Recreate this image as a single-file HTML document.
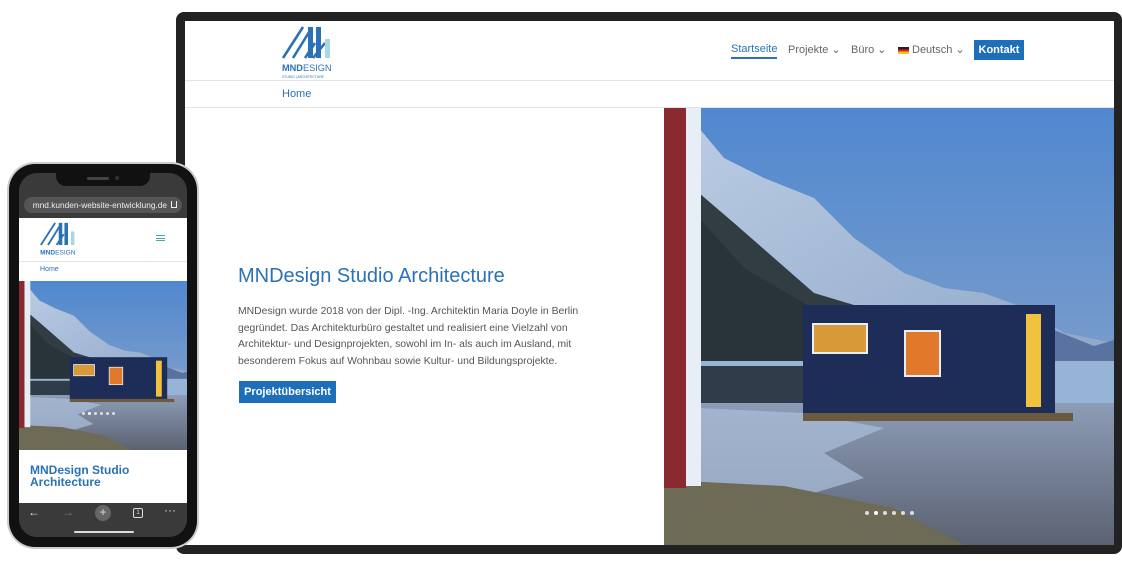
<!DOCTYPE html>
<html><head><meta charset="utf-8"><style>
*{margin:0;padding:0;box-sizing:border-box}
body{width:1122px;height:568px;background:#fff;position:relative;overflow:hidden;font-family:"Liberation Sans",sans-serif}
.a{position:absolute}
.blue{color:#2a72b5}
</style></head><body>
<svg width="0" height="0" style="position:absolute">
<defs>
<linearGradient id="sky" x1="0" y1="0" x2="0" y2="1"><stop offset="0" stop-color="#5088cf"/><stop offset="0.5" stop-color="#7399cc"/><stop offset="1" stop-color="#9ab3d4"/></linearGradient>
<linearGradient id="snow" x1="0" y1="0" x2="1" y2="1"><stop offset="0" stop-color="#b9cbe3"/><stop offset="1" stop-color="#8ea7c8"/></linearGradient>
<linearGradient id="gr" x1="0" y1="0" x2="0" y2="1"><stop offset="0" stop-color="#8d9cb6"/><stop offset="1" stop-color="#5b6272"/></linearGradient>
<symbol id="scene" viewBox="0 0 450 437" preserveAspectRatio="xMidYMid slice">
<rect width="450" height="437" fill="url(#sky)"/>
<path d="M35 20 L60 50 L100 70 L150 90 L190 130 L240 165 L280 180 L320 185 L360 200 L400 225 L450 235 L450 260 L35 260Z" fill="url(#snow)"/>
<path d="M35 85 L70 115 L110 150 L150 185 L200 200 L230 215 L35 260Z" fill="#313d42"/>
<path d="M35 110 L80 160 L140 195 L160 205 L139 260 L35 260Z" fill="#28343a"/>
<path d="M380 218 L430 238 L450 232 L450 255 L385 255Z" fill="#5a72a0"/>
<rect x="35" y="253" width="415" height="45" fill="#97b4d6"/>
<rect x="35" y="258" width="110" height="37" fill="#2e3d49"/>
<rect x="35" y="295" width="415" height="142" fill="url(#gr)"/>
<path d="M35 300 L140 305 L220 320 L160 345 L200 370 L150 385 L35 380Z" fill="#a9bcd8" opacity=".75"/>
<path d="M0 372 L120 378 L230 400 L300 437 L0 437Z" fill="#6d6b55"/>
<rect x="139" y="197" width="252" height="108" fill="#1d2d57"/>
<rect x="139" y="305" width="270" height="8" fill="#6b5a3e"/>
<rect x="148" y="215" width="56" height="31" fill="#e8eef5"/><rect x="150" y="217" width="52" height="27" fill="#d89a38"/>
<rect x="240" y="222" width="37" height="47" fill="#e8eef5"/><rect x="242" y="224" width="33" height="43" fill="#e07a2a"/>
<rect x="362" y="206" width="15" height="93" fill="#f0c23e"/>
<rect x="0" y="0" width="22" height="380" fill="#8a2a30"/>
<rect x="22" y="0" width="15" height="378" fill="#e8eef6"/>
</symbol>
</defs></svg>

<!-- Monitor -->
<div class="a" style="left:176px;top:12px;width:946px;height:542px;background:#222;border-radius:8px"></div>
<div class="a" style="left:185px;top:21px;width:929px;height:524px;background:#fff;overflow:hidden">
  <svg class="a" style="left:96px;top:2px" width="52" height="56" viewBox="0 0 52 56">
    <path d="M2 35 L22 4 M12 35 L30 6 M24 35 L34 20 M32 35 L44 20" stroke="#2a72b5" stroke-width="2.6" fill="none"/>
    <rect x="27" y="4" width="5" height="31" fill="#2a72b5"/>
    <rect x="35" y="4" width="5" height="31" fill="#2a72b5"/>
    <rect x="44" y="16" width="5" height="19" fill="#a8d8e6"/>
    <text x="1" y="48" font-size="9.2" fill="#2a72b5" font-family="Liberation Sans" font-weight="bold">MND<tspan font-weight="normal">ESIGN</tspan></text>
    <text x="1" y="55" font-size="3.4" fill="#2a72b5" font-family="Liberation Sans">STUDIO | ARCHITECTURE</text>
  </svg>
  <div class="a" style="left:546px;top:22px;font-size:11px;color:#2a72b5;border-bottom:2px solid #2a72b5;padding-bottom:2px">Startseite</div>
  <div class="a" style="left:603px;top:22px;font-size:11px;color:#666">Projekte ⌄</div>
  <div class="a" style="left:666px;top:22px;font-size:11px;color:#666">Büro ⌄</div>
  <div class="a" style="left:713px;top:26px;width:11px;height:7px;background:linear-gradient(#222 33%,#d22 33% 66%,#f5c518 66%)"></div>
  <div class="a" style="left:727px;top:22px;font-size:11px;color:#666">Deutsch ⌄</div>
  <div class="a" style="left:789px;top:19px;width:50px;height:20px;background:#1e6fba;color:#fff;font-size:11px;font-weight:bold;text-align:center;line-height:20px">Kontakt</div>
  <div class="a" style="left:0;top:59px;width:929px;height:1px;background:#e4e4e4"></div>
  <div class="a blue" style="left:97px;top:67px;font-size:11px">Home</div>
  <div class="a" style="left:0;top:86px;width:929px;height:1px;background:#e4e4e4"></div>
  <div class="a blue" style="left:53px;top:244px;font-size:20px;white-space:nowrap">MNDesign Studio Architecture</div>
  <div class="a" style="left:53px;top:283px;width:352px;font-size:10.4px;line-height:16.5px;color:#555">MNDesign wurde 2018 von der Dipl. -Ing. Architektin Maria Doyle in Berlin gegründet. Das Architekturbüro gestaltet und realisiert eine Vielzahl von Architektur- und Designprojekten, sowohl im In- als auch im Ausland, mit besonderem Fokus auf Wohnbau sowie Kultur- und Bildungsprojekte.</div>
  <div class="a" style="left:54px;top:360px;width:97px;height:22px;background:#1e6fba;color:#fff;font-size:11px;font-weight:bold;text-align:center;line-height:22px">Projektübersicht</div>
  <svg class="a" style="left:479px;top:87px" width="450" height="437" viewBox="0 0 450 437"><use href="#scene" width="450" height="437"/></svg>
  <div class="a" style="left:680px;top:490px;display:flex;gap:5px"><i style="width:4px;height:4px;border-radius:50%;background:#ddd"></i><i style="width:4px;height:4px;border-radius:50%;background:#fff"></i><i style="width:4px;height:4px;border-radius:50%;background:#ddd"></i><i style="width:4px;height:4px;border-radius:50%;background:#ddd"></i><i style="width:4px;height:4px;border-radius:50%;background:#ddd"></i><i style="width:4px;height:4px;border-radius:50%;background:#ddd"></i></div>
</div>

<!-- Phone -->
<div class="a" style="left:7px;top:162px;width:192px;height:387px;background:#ccc;border-radius:28px"></div>
<div class="a" style="left:9px;top:164px;width:188px;height:383px;background:#111;border-radius:26px"></div>
<div class="a" style="left:19px;top:173px;width:168px;height:364px;background:#3a3a3a;border-radius:18px;overflow:hidden">
  <div class="a" style="left:37px;top:0;width:94px;height:13px;background:#111;border-radius:0 0 10px 10px"></div>
  <div class="a" style="left:68px;top:4px;width:22px;height:3px;background:#444;border-radius:2px"></div>
  <div class="a" style="left:96px;top:3px;width:4px;height:4px;background:#333;border-radius:50%"></div>
  <div class="a" style="left:5px;top:24px;width:158px;height:16px;background:#555;border-radius:8px;color:#eee;font-size:8.3px;line-height:16px;text-align:right;padding-right:15px;white-space:nowrap">mnd.kunden-website-entwicklung.de</div>
  <div class="a" style="left:152px;top:28px;width:6px;height:7px;border:1px solid #eee;border-top:none"></div>
  <div class="a" style="left:0;top:45px;width:168px;height:285px;background:#fff"></div>
  <svg class="a" style="left:20px;top:47px" width="38" height="40" viewBox="0 0 52 56">
    <path d="M2 35 L22 4 M12 35 L30 6 M24 35 L34 20" stroke="#2a72b5" stroke-width="2.6" fill="none"/>
    <rect x="27" y="4" width="5" height="31" fill="#2a72b5"/><rect x="35" y="4" width="5" height="31" fill="#2a72b5"/><rect x="44" y="16" width="5" height="19" fill="#a8d8e6"/>
    <text x="1" y="48" font-size="9.2" fill="#2a72b5" font-family="Liberation Sans" font-weight="bold">MND<tspan font-weight="normal">ESIGN</tspan></text>
  </svg>
  <div class="a" style="left:137px;top:62px;width:9px;height:6px;border-top:1px solid #4aa;border-bottom:1px solid #4aa"></div>
  <div class="a" style="left:137px;top:65px;width:9px;height:1px;background:#4aa"></div>
  <div class="a" style="left:0;top:88px;width:168px;height:1px;background:#e4e4e4"></div>
  <div class="a blue" style="left:21px;top:93px;font-size:7px">Home</div>
  <svg class="a" style="left:0;top:108px" width="168" height="169" viewBox="0 0 450 437" preserveAspectRatio="xMidYMid slice"><use href="#scene" width="450" height="437"/></svg>
  <div class="a" style="left:63px;top:239px;display:flex;gap:3px"><i style="width:3px;height:3px;border-radius:50%;background:#ddd"></i><i style="width:3px;height:3px;border-radius:50%;background:#fff"></i><i style="width:3px;height:3px;border-radius:50%;background:#ddd"></i><i style="width:3px;height:3px;border-radius:50%;background:#ddd"></i><i style="width:3px;height:3px;border-radius:50%;background:#ddd"></i><i style="width:3px;height:3px;border-radius:50%;background:#ddd"></i></div>
  <div class="a blue" style="left:11px;top:291px;font-size:12px;line-height:12px;font-weight:bold">MNDesign Studio<br>Architecture</div>
  <div class="a" style="left:0;top:330px;width:168px;height:34px;background:#3a3a3a;color:#ddd;font-size:12px">
    <span class="a" style="left:9px;top:2px">←</span>
    <span class="a" style="left:43px;top:2px;color:#777">→</span>
    <span class="a" style="left:76px;top:2px;width:16px;height:16px;background:#666;border-radius:50%;text-align:center;line-height:15px">+</span>
    <span class="a" style="left:114px;top:5px;width:10px;height:10px;border:1px solid #ddd;border-radius:2px;font-size:6px;text-align:center;line-height:8px">1</span>
    <span class="a" style="left:145px;top:0px">···</span>
    <span class="a" style="left:55px;top:28px;width:60px;height:2px;background:#ddd;border-radius:1px"></span>
  </div>
</div>
</body></html>
